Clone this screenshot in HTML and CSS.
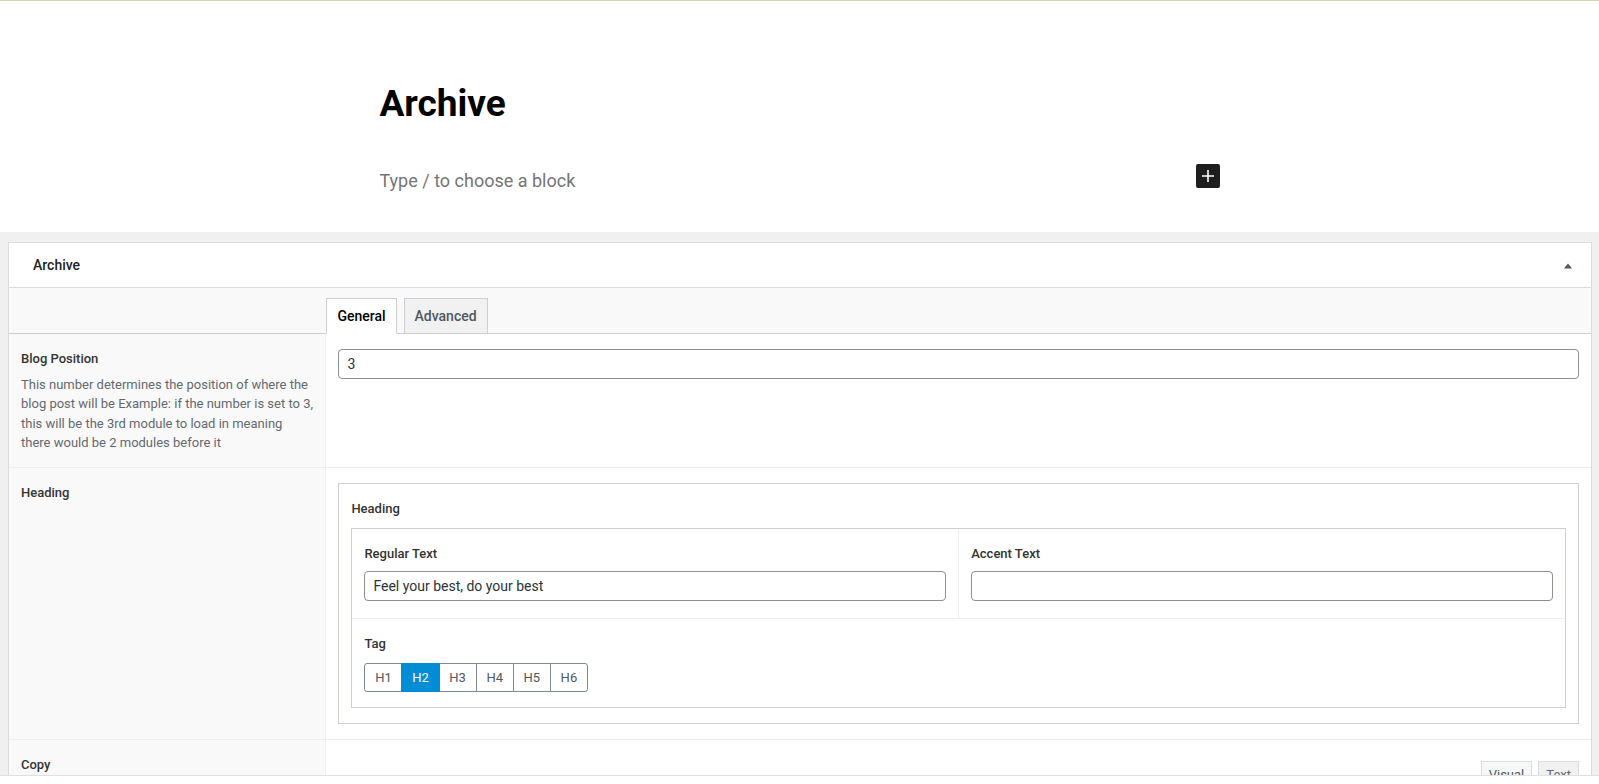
FILE: index.html
```html
<!DOCTYPE html>
<html lang="en">
<head>
<meta charset="utf-8">
<title>Archive</title>
<link rel="stylesheet" href="styles.css">
</head>
<body>
<div class="skeleton">
  <div class="content">
    <div class="editor">
      <div class="editor-column">
        <h1 class="post-title">Archive</h1>
        <div class="block-row">
          <p class="placeholder">Type / to choose a block</p>
          <button class="inserter" type="button" aria-label="Add block">
            <svg width="24" height="24" viewBox="0 0 24 24"><path d="M18 11.2h-5.2V6h-1.6v5.2H6v1.6h5.2V18h1.6v-5.2H18z" fill="#fff"/></svg>
          </button>
        </div>
      </div>
    </div>
    <div class="metaboxes">
      <div class="postbox">
        <div class="postbox-header">
          <h2 class="postbox-title">Archive</h2>
          <span class="toggle"><svg width="8" height="6" viewBox="0 0 8 6"><path d="M0 5.5L4 0.5L8 5.5Z" fill="#50575e"/></svg></span>
        </div>
        <div class="fields">
          <ul class="tabs">
            <li class="tab active">General</li>
            <li class="tab">Advanced</li>
          </ul>

          <div class="field first">
            <div class="label">
              <label class="field-label">Blog Position</label>
              <p class="description">This number determines the position of where the blog post will be Example: if the number is set to 3, this will be the 3rd module to load in meaning there would be 2 modules before it</p>
            </div>
            <div class="input">
              <input class="text-input" type="text" value="3">
            </div>
          </div>

          <div class="field">
            <div class="label">
              <label class="field-label">Heading</label>
            </div>
            <div class="input">
              <div class="group-box">
                <label class="field-label sub-title">Heading</label>
                <div class="inner-box">
                  <div class="sub-row">
                    <div class="cell">
                      <label class="field-label cell-label">Regular Text</label>
                      <input class="text-input" type="text" value="Feel your best, do your best">
                    </div>
                    <div class="cell">
                      <label class="field-label cell-label">Accent Text</label>
                      <input class="text-input" type="text" value="">
                    </div>
                  </div>
                  <div class="tag-row">
                    <label class="field-label tag-label">Tag</label>
                    <div class="btn-group">
                      <span class="btn">H1</span>
                      <span class="btn selected">H2</span>
                      <span class="btn">H3</span>
                      <span class="btn">H4</span>
                      <span class="btn">H5</span>
                      <span class="btn">H6</span>
                    </div>
                  </div>
                </div>
              </div>
            </div>
          </div>

          <div class="field">
            <div class="label">
              <label class="field-label">Copy</label>
            </div>
            <div class="input">
              <div class="editor-tabs">
                <span class="switch active">Visual</span>
                <span class="switch">Text</span>
              </div>
            </div>
          </div>
        </div>
      </div>
    </div>
  </div>
  <div class="footer"></div>
</div>
</body>
</html>
```

FILE: styles.css
```css
* {
  box-sizing: border-box;
}

html,
body {
  margin: 0;
  height: 100%;
}

body {
  font-family: Roboto, "Liberation Sans", sans-serif;
  color: #3c434a;
  background: #fff;
  overflow: hidden;
}

.skeleton {
  height: 100vh;
  display: flex;
  flex-direction: column;
  border-top: 1px solid #e2cfb0;
}

.content {
  flex: 1;
  min-height: 0;
  overflow: hidden;
  display: flex;
  flex-direction: column;
}

/* ---------- editor canvas ---------- */
.editor {
  flex: none;
  height: 231px;
  background: #fff;
  padding-top: 77px;
}

.editor-column {
  width: 840px;
  margin: 0 auto;
}

.post-title {
  margin: 0;
  font-size: 37px;
  line-height: 1.4;
  font-weight: 700;
  color: #000;
}

.block-row {
  margin-top: 35px;
  display: flex;
  justify-content: space-between;
  align-items: flex-start;
}

.placeholder {
  margin: 0;
  font-size: 18px;
  line-height: 1.8;
  color: #757575;
}

.inserter {
  width: 24px;
  height: 24px;
  margin-top: -1px;
  padding: 0;
  border: 0;
  border-radius: 2px;
  background: #1e1e1e;
  display: flex;
  align-items: center;
  justify-content: center;
}

/* ---------- meta boxes ---------- */
.metaboxes {
  flex: 1;
  min-height: 0;
  overflow: hidden;
  background: #f0f0f1;
  padding: 10px 7px 0 8px;
}

.postbox {
  background: #fff;
  border: 1px solid #dcdcde;
}

.postbox-header {
  height: 45px;
  display: flex;
  align-items: center;
  justify-content: space-between;
  border-bottom: 1px solid #dcdcde;
  padding: 1px 19px 0 24px;
}

.postbox-title {
  margin: 0;
  font-size: 14px;
  line-height: 1.4;
  font-weight: 500;
  color: #1d2327;
}

.toggle {
  display: flex;
  width: 8px;
  height: 6px;
}

.tabs {
  margin: 0;
  padding: 10px 0 0 calc(20% + 1px);
  list-style: none;
  display: flex;
  gap: 7px;
  background: #f9f9f9;
  border-bottom: 1px solid #ccd0d4;
}

.tab {
  padding: 8px 10px;
  font-size: 14px;
  line-height: 18px;
  font-weight: 500;
  color: #50575e;
  background: #f1f1f1;
  border: 1px solid #ccd0d4;
  margin-bottom: -1px;
}

.tab.active {
  background: #fff;
  color: #000;
  border-bottom-color: #fff;
}

.field {
  display: flex;
  border-top: 1px solid #eee;
}

.field.first {
  border-top: 0;
}

.label {
  flex: 0 0 calc(20% + 1px);
  background: #f9f9f9;
  border-right: 1px solid #eee;
  padding: 15px 12px 14.5px 12px;
}

.input {
  flex: 1;
  min-width: 0;
  padding: 15px 12px;
}

.field-label {
  display: block;
  font-size: 13px;
  line-height: 1.5;
  font-weight: 500;
  color: #333;
}

.description {
  margin: 6px 0 0;
  font-size: 13px;
  line-height: 1.5;
  color: #646970;
}

.text-input {
  display: block;
  width: 100%;
  height: 30px;
  margin: 0;
  padding: 0 8px;
  border: 1px solid #8c8f94;
  border-radius: 4px;
  background: #fff;
  font-family: Roboto, "Liberation Sans", sans-serif;
  font-size: 14px;
  color: #2c3338;
  outline: none;
}

.group-box {
  border: 1px solid #ccd0d4;
  padding: 15px 12px;
}

.sub-title {
  margin-bottom: 9px;
}

.inner-box {
  border: 1px solid #ccd0d4;
}

.sub-row {
  display: flex;
}

.cell {
  flex: 1 1 0;
  min-width: 0;
  padding: 15px 12px 17px;
}

.cell + .cell {
  border-left: 1px solid #eee;
}

.cell-label {
  margin-bottom: 8px;
}

.tag-row {
  border-top: 1px solid #eee;
  padding: 15px 12px;
}

.tag-label {
  margin-bottom: 9px;
}

.btn-group {
  display: inline-flex;
}

.btn {
  position: relative;
  height: 29px;
  padding: 0 9.75px;
  line-height: 27px;
  font-size: 13px;
  color: #50575e;
  background: #fff;
  border: 1px solid #7e8993;
  margin-left: -1px;
}

.btn:first-child {
  margin-left: 0;
  border-radius: 3px 0 0 3px;
}

.btn:last-child {
  border-radius: 0 3px 3px 0;
}

.btn.selected {
  z-index: 1;
  background: #008dd4;
  border-color: #008dd4;
  color: #fff;
}

.editor-tabs {
  display: flex;
  justify-content: flex-end;
  gap: 6px;
  padding-top: 6px;
}

.switch {
  padding: 3px 7px 4px;
  font-size: 13px;
  line-height: 19px;
  color: #646970;
  background: #f0f0f1;
  border: 1px solid #dcdcde;
}

.switch.active {
  background: #f6f7f7;
  color: #50575e;
}

.footer {
  flex: none;
  height: 9px;
  background: #fff;
  border-top: 1px solid #e0e0e0;
}
```
